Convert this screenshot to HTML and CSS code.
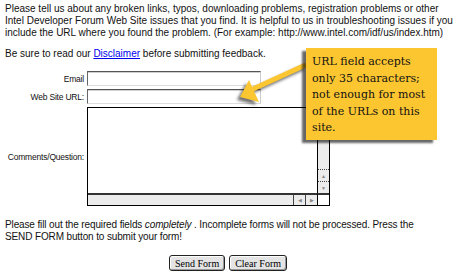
FILE: index.html
```html
<!DOCTYPE html>
<html lang="en">
<head>
  <meta charset="UTF-8" />
  <title>Feedback</title>
  <link rel="stylesheet" href="styles.css">
</head>
<body>
  <p class="intro">Please tell us about any broken links, typos, downloading problems, registration problems or other<br>Intel Developer Forum Web Site issues that you find. It is helpful to us in troubleshooting issues if you<br>include the URL where you found the problem. (For example: http://www.intel.com/idf/us/index.htm)</p>
  <p class="note">Be sure to read our <a href="#">Disclaimer</a> before submitting feedback.</p>

  <form class="feedback">
    <label for="email">Email</label>
    <input type="text" id="email" class="field">
    <label for="url">Web Site URL:</label>
    <input type="text" id="url" class="field" maxlength="35">
    <label for="comments" class="mid">Comments/Question:</label>
    <div class="textbox">
      <textarea id="comments"></textarea>
      <div class="vbar">
        <span class="btn">&#9650;</span>
        <span class="btn">&#9660;</span>
      </div>
      <div class="hbar">
        <span class="btn">&#9664;</span>
        <span class="btn">&#9654;</span>
      </div>
      <div class="corner"></div>
    </div>
  </form>

  <p class="footer">Please fill out the required fields <em>completely</em> . Incomplete forms will not be processed. Press the<br>SEND FORM button to submit your form!</p>

  <div class="actions">
    <button type="button">Send Form</button>
    <button type="button">Clear Form</button>
  </div>

  <!-- callout -->
  <svg class="arrow" viewBox="230 58 80 50" width="80" height="50">
    <polygon points="240,97 249,80 252,86.7 305,62.5 307,67 254,91.3 259,102" fill="#fcc631"/>
  </svg>
  <div class="callout">URL field accepts<br>only 35 characters;<br>not enough for most<br>of the URLs on this<br>site.</div>
</body>
</html>
```

FILE: styles.css
```css
body {
  margin: 0;
  padding: 3px 5px 0;
  font-family: "Liberation Sans", Arial, sans-serif;
  font-size: 10px;
  color: #111;
  background: #fff;
}
p {
  margin: 0;
  line-height: 12px;
  white-space: nowrap;
}
.note {
  margin-top: 9px;
}
a {
  color: #0000ee;
}
.feedback {
  display: grid;
  grid-template-columns: 79px 1fr;
  column-gap: 3px;
  row-gap: 2px;
  margin-top: 11px;
}
label {
  font-size: 8.5px;
  text-align: right;
  line-height: 15px;
  padding-top: 1px;
  letter-spacing: -0.2px;
}
label.mid {
  align-self: center;
}
.field {
  width: 174px;
  height: 15px;
  box-sizing: border-box;
  margin: 0;
  padding: 0 2px;
  border: 1px solid;
  border-color: #555 #ccc #ddd #666;
  box-shadow: inset 0 1px #cfcfcf;
  font: 10px "Liberation Sans", sans-serif;
  outline: none;
}
.textbox {
  width: 243px;
  height: 99px;
  box-sizing: border-box;
  border: 1px solid #000;
  display: grid;
  grid-template-columns: 1fr 12px;
  grid-template-rows: 1fr 12px;
}
.textbox textarea {
  border: none;
  resize: none;
  outline: none;
  margin: 0;
  padding: 2px;
  font: 10px "Liberation Sans", sans-serif;
}
.vbar {
  border-left: 1px solid #000;
  background: #ececec;
  display: flex;
  flex-direction: column;
  justify-content: flex-end;
}
.hbar {
  border-top: 2px solid #333;
  background: #ececec;
  display: flex;
  justify-content: flex-end;
}
.btn {
  font-size: 5px;
  color: #888;
  display: flex;
  align-items: center;
  justify-content: center;
}
.vbar .btn {
  height: 11px;
  border-top: 1px dotted #444;
}
.hbar .btn {
  width: 11px;
  border-left: 1px solid #444;
}
.corner {
  border-left: 1px solid #000;
  border-top: 2px solid #333;
  background: #fff;
}
.footer {
  margin-top: 13px;
  letter-spacing: -0.13px;
}
.actions {
  display: flex;
  justify-content: center;
  gap: 4px;
  margin-top: 12px;
}
button {
  font-family: "Liberation Serif", "Times New Roman", serif;
  font-size: 10px;
  color: #000;
  height: 16px;
  padding: 0 5px;
  border: 1px solid #222;
  border-radius: 3px;
  background: #e4e4e4;
  box-shadow: inset 1px 1px #fff, inset -1px -1px #999;
}
.arrow {
  position: absolute;
  left: 230px;
  top: 58px;
  filter: drop-shadow(-3px 3px 1.5px rgba(0, 0, 0, 0.55));
}
.callout {
  position: absolute;
  left: 306px;
  top: 48px;
  width: 131px;
  height: 92px;
  box-sizing: border-box;
  padding: 6px 4px 0 6px;
  background: #fcc631;
  box-shadow: -4px 3px 2px rgba(0, 0, 0, 0.6);
  font-family: "DejaVu Serif", "Liberation Serif", serif;
  font-size: 11px;
  line-height: 16.5px;
  color: #111;
  white-space: nowrap;
}
```
